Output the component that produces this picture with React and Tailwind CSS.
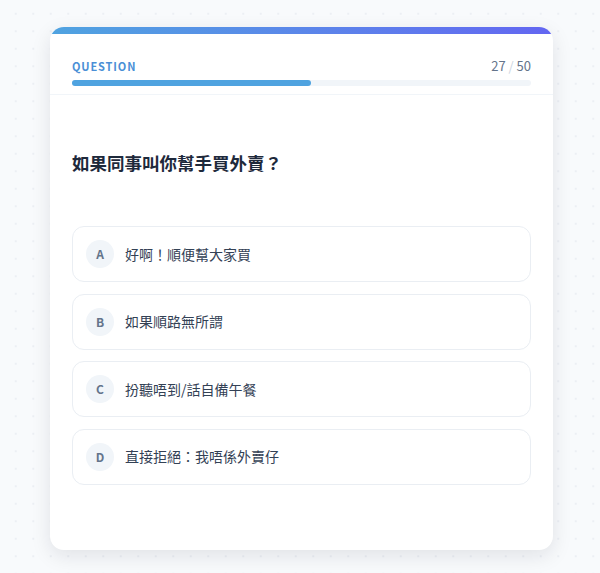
import React from 'react';

const options = [
  { key: 'A', text: '好啊！順便幫大家買' },
  { key: 'B', text: '如果順路無所謂' },
  { key: 'C', text: '扮聽唔到/話自備午餐' },
  { key: 'D', text: '直接拒絕：我唔係外賣仔' },
];

function App() {
  const current = 27;
  const total = 50;

  return (
    <div
      className="min-h-[573px] bg-[#f8fafc] bg-[radial-gradient(#eceff4_1px,transparent_1px)] bg-[size:17.5px_17.5px] bg-[position:7px_5px] pt-[27px] pb-[23px]"
      style={{ fontFamily: '"Noto Sans CJK TC", "Noto Sans", sans-serif' }}
    >
      <div className="ml-[50px] w-[503px] bg-white rounded-[14px] overflow-hidden shadow-[0_6px_20px_rgba(15,23,42,0.10)]">
        <div className="h-[7px] bg-gradient-to-r from-[#4fa3e0] to-[#6366f1]" />

        <header className="px-[22px] pt-[23px] pb-[8px] border-b border-[#f1f5f9]">
          <div className="flex items-center justify-between h-[18px]">
            <span className="text-[11px] font-bold tracking-[0.08em] text-[#4a8fd6]">QUESTION</span>
            <span className="text-[13px] font-normal text-[#64748b]">
              {current} <span className="text-[#cbd5e1]">/</span> {total}
            </span>
          </div>
          <div className="mt-[5px] h-[6px] rounded-full bg-[#f1f5f9]">
            <div className="h-full rounded-full bg-[#4fa3e0]" style={{ width: '52%' }} />
          </div>
        </header>

        <main className="px-[22px] pt-[54px] pb-[65px]">
          <h2 className="text-[17.5px] leading-[28px] font-bold text-[#1e293b]">如果同事叫你幫手買外賣？</h2>

          <div className="mt-[49px] flex flex-col gap-[11.5px]">
            {options.map((opt) => (
              <button
                key={opt.key}
                className="h-[56px] w-full flex items-center gap-[11px] px-[13px] border border-[#eaeef3] rounded-[12px] bg-white text-left"
              >
                <span className="w-[28px] h-[28px] rounded-full bg-[#f1f5f9] flex items-center justify-center text-[12px] font-bold text-[#64748b]">
                  {opt.key}
                </span>
                <span className="text-[14px] text-[#334155]">{opt.text}</span>
              </button>
            ))}
          </div>
        </main>
      </div>
    </div>
  );
}

export default App;
